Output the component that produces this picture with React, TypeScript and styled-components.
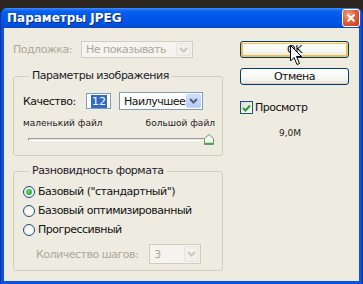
import styled, { createGlobalStyle } from 'styled-components';

const GlobalStyle = createGlobalStyle`
  html, body {
    margin: 0;
    padding: 0;
    background: #1f1c16;
  }
  * {
    box-sizing: border-box;
  }
`;

const ui = `"DejaVu Sans", "Liberation Sans", sans-serif`;

const Window = styled.div`
  width: 363px;
  height: 284px;
  padding-top: 8px;
  background: linear-gradient(#2b2720, #15130f);
  display: flex;
  flex-direction: column;
`;

const Frame = styled.div`
  flex: 1;
  display: flex;
  flex-direction: column;
  background: #0a53dc;
  border-radius: 7px 7px 0 0;
  border-left: 1px solid #0831a5;
  border-right: 1px solid #0831a5;
  overflow: hidden;
`;

const TitleBar = styled.div`
  height: 20px;
  display: flex;
  align-items: center;
  justify-content: space-between;
  padding: 0 2px 0 6px;
  background: linear-gradient(#3d8cff 0, #0a62ee 3px, #0257e8 45%, #0053e3 80%, #0a49c8 100%);
`;

const Title = styled.span`
  font-family: ${ui};
  font-weight: bold;
  font-size: 12px;
  color: #fff;
  text-shadow: 1px 1px 0 #0a2a80;
`;

const CloseButton = styled.div`
  width: 18px;
  height: 18px;
  border: 1px solid #fff;
  border-radius: 3px;
  background: radial-gradient(circle at 35% 30%, #f3a183 0, #e4613b 45%, #c53a14 100%);
  display: flex;
  align-items: center;
  justify-content: center;
`;

const Body = styled.div`
  flex: 1;
  margin: 0 3px 3px 3px;
  background: #eeebe0;
  display: flex;
  gap: 17px;
  padding: 13px 0 0 9px;
  font-family: ${ui};
  font-size: 11px;
  letter-spacing: -0.5px;
  color: #111;
  white-space: nowrap;
`;

const LeftColumn = styled.div`
  width: 210px;
  display: flex;
  flex-direction: column;
`;

const RightColumn = styled.div`
  width: 109px;
  display: flex;
  flex-direction: column;
`;

const Row = styled.div<{ $indent?: number }>`
  display: flex;
  align-items: center;
  padding-left: ${(p) => p.$indent ?? 0}px;
`;

const Label = styled.span<{ $width?: number; $disabled?: boolean }>`
  width: ${(p) => (p.$width ? `${p.$width}px` : 'auto')};
  color: ${(p) => (p.$disabled ? '#aca899' : '#111')};
`;

const Combo = styled.div<{ $width: number; $height?: number; $disabled?: boolean }>`
  width: ${(p) => p.$width}px;
  height: ${(p) => p.$height ?? 18}px;
  border: 1px solid ${(p) => (p.$disabled ? '#cfcdc0' : '#7f9db9')};
  background: ${(p) => (p.$disabled ? '#f5f4ee' : '#fff')};
  color: ${(p) => (p.$disabled ? '#aca899' : '#111')};
  display: flex;
  align-items: center;
  justify-content: space-between;
  padding: 1px 1px 1px 4px;
`;

const ComboArrow = styled.div<{ $disabled?: boolean }>`
  width: 15px;
  align-self: stretch;
  border-radius: 2px;
  background: ${(p) =>
    p.$disabled ? '#f1f0ea' : 'linear-gradient(#d3defb, #b8cbf6)'};
  border: 1px solid ${(p) => (p.$disabled ? '#e6e4da' : '#c3d3fd')};
  display: flex;
  align-items: center;
  justify-content: center;
`;

const Field = styled.div`
  width: 25px;
  height: 16px;
  border: 1px solid #7f9db9;
  background: #fff;
  display: flex;
  align-items: center;
  padding-left: 4px;
`;

const Selected = styled.span`
  background: #316ac5;
  color: #fff;
  line-height: 13px;
  padding: 0 1px;
  letter-spacing: 0;
`;

const Group = styled.fieldset<{ $top: number }>`
  margin: ${(p) => p.$top}px 0 0 0;
  padding: 0 7px 0 9px;
  border: 1px solid #d0d0bf;
  border-radius: 3px;
  min-width: 0;
`;

const Legend = styled.legend`
  margin-left: 6px;
  padding: 0 3px;
  line-height: 14px;
  color: #1c1b2c;
`;

const Tiny = styled.div`
  display: flex;
  justify-content: space-between;
  font-size: 9px;
  letter-spacing: 0;
  line-height: 11px;
  color: #222;
  margin-top: 8px;
`;

const Slider = styled.div`
  display: flex;
  align-items: center;
  height: 11px;
  margin: 5px 0 10px 5px;
  width: 186px;
`;

const Track = styled.div`
  flex: 1;
  height: 3px;
  border-top: 1px solid #9d9c99;
  border-left: 1px solid #9d9c99;
  border-bottom: 1px solid #fff;
  border-right: 1px solid #fff;
  background: #e5e4dc;
`;

const Radio = styled.div<{ $checked?: boolean }>`
  width: 12px;
  height: 12px;
  border-radius: 50%;
  border: 1px solid #1c5180;
  background: radial-gradient(circle at 60% 65%, #fff 0, #e8e6da 100%);
  display: flex;
  align-items: center;
  justify-content: center;
  margin-right: 3px;

  &::after {
    content: '';
    width: 6px;
    height: 6px;
    border-radius: 50%;
    background: ${(p) =>
      p.$checked ? 'radial-gradient(circle at 40% 35%, #67d667, #1b9b1b)' : 'transparent'};
  }
`;

const RadioList = styled.div`
  display: flex;
  flex-direction: column;
  padding-top: 4px;
`;

const RadioRow = styled.div`
  height: 19px;
  display: flex;
  align-items: center;
`;

const StepsRow = styled(Row)`
  margin: 5px 0 6px 0;
  gap: 11px;
`;

const Button = styled.div<{ $hot?: boolean }>`
  position: relative;
  height: 17px;
  border: 1px solid #003c74;
  border-radius: 3px;
  background: linear-gradient(#fff 0, #f7f7f4 60%, #e6e3d9 100%);
  box-shadow: ${(p) =>
    p.$hot ? 'inset 0 1px 0 #fff0cf, inset 0 0 0 2px #f4c14a' : 'inset 0 -1px 0 #d6d0c5'};
  display: flex;
  align-items: center;
  justify-content: center;
  color: #111;
  & + & {
    margin-top: 10px;
  }
`;

const Cursor = styled.svg`
  position: absolute;
  left: 49px;
  top: 3px;
`;

const CheckRow = styled.div`
  display: flex;
  align-items: center;
  gap: 2px;
  margin-top: 16px;
`;

const CheckBox = styled.div`
  width: 13px;
  height: 13px;
  border: 1px solid #1c5180;
  background: linear-gradient(135deg, #dcdbd3, #fff);
  display: flex;
  align-items: center;
  justify-content: center;
`;

const Size = styled.div`
  margin-top: 14px;
  padding-left: 39px;
  font-size: 9px;
  letter-spacing: 0;
  line-height: 11px;
  color: #222;
`;

const Chevron = ({ color }: { color: string }) => (
  <svg width="9" height="6" viewBox="0 0 9 6">
    <path d="M1 1 L4.5 4.5 L8 1" fill="none" stroke={color} strokeWidth="2" />
  </svg>
);

export default function App() {
  return (
    <>
      <GlobalStyle />
      <Window>
        <Frame>
          <TitleBar>
            <Title>Параметры JPEG</Title>
            <CloseButton>
              <svg width="10" height="10" viewBox="0 0 10 10">
                <path d="M1.5 1.5 L8.5 8.5 M8.5 1.5 L1.5 8.5" stroke="#fff" strokeWidth="2" />
              </svg>
            </CloseButton>
          </TitleBar>
          <Body>
            <LeftColumn>
              <Row>
                <Label $width={68} $disabled>
                  Подложка:
                </Label>
                <Combo $width={112} $height={17} $disabled>
                  <span>Не показывать</span>
                  <ComboArrow $disabled>
                    <Chevron color="#cac8bb" />
                  </ComboArrow>
                </Combo>
              </Row>

              <Group $top={11}>
                <Legend>Параметры изображения</Legend>
                <Row style={{ marginTop: 9 }}>
                  <Label $width={63}>Качество:</Label>
                  <Field>
                    <Selected>12</Selected>
                  </Field>
                  <Combo $width={84} style={{ marginLeft: 8 }}>
                    <span>Наилучшее</span>
                    <ComboArrow>
                      <Chevron color="#4d6185" />
                    </ComboArrow>
                  </Combo>
                </Row>
                <Tiny>
                  <span>маленький файл</span>
                  <span>большой файл</span>
                </Tiny>
                <Slider>
                  <Track />
                  <svg width="10" height="11" viewBox="0 0 10 11" style={{ marginLeft: -2 }}>
                    <path d="M0.5 4.5 L5 0.5 L9.5 4.5 L9.5 10.5 L0.5 10.5 Z" fill="#f6f5ef" stroke="#7a8f7a" />
                    <path d="M1 9.5 H9" stroke="#3bb13b" strokeWidth="1.5" />
                  </svg>
                </Slider>
              </Group>

              <Group $top={8}>
                <Legend>Разновидность формата</Legend>
                <RadioList>
                  <RadioRow>
                    <Radio $checked />
                    Базовый ("стандартный")
                  </RadioRow>
                  <RadioRow>
                    <Radio />
                    Базовый оптимизированный
                  </RadioRow>
                  <RadioRow>
                    <Radio />
                    Прогрессивный
                  </RadioRow>
                </RadioList>
                <StepsRow $indent={13}>
                  <Label $disabled>Количество шагов:</Label>
                  <Combo $width={52} $height={20} $disabled>
                    <span>3</span>
                    <ComboArrow $disabled>
                      <Chevron color="#cac8bb" />
                    </ComboArrow>
                  </Combo>
                </StepsRow>
              </Group>
            </LeftColumn>

            <RightColumn>
              <Button $hot>
                OK
                <Cursor width="13" height="21" viewBox="0 0 13 21">
                  <path
                    d="M0.5 0.5 L0.5 16 L4 12.5 L7 19.5 L9.5 18.5 L6.5 11.5 L11.5 11.5 Z"
                    fill="#fff"
                    stroke="#000"
                  />
                </Cursor>
              </Button>
              <Button>Отмена</Button>
              <CheckRow>
                <CheckBox>
                  <svg width="9" height="8" viewBox="0 0 9 8">
                    <path d="M1 4 L3.5 6.5 L8 1.5" fill="none" stroke="#21a121" strokeWidth="2" />
                  </svg>
                </CheckBox>
                Просмотр
              </CheckRow>
              <Size>9,0M</Size>
            </RightColumn>
          </Body>
        </Frame>
      </Window>
    </>
  );
}
